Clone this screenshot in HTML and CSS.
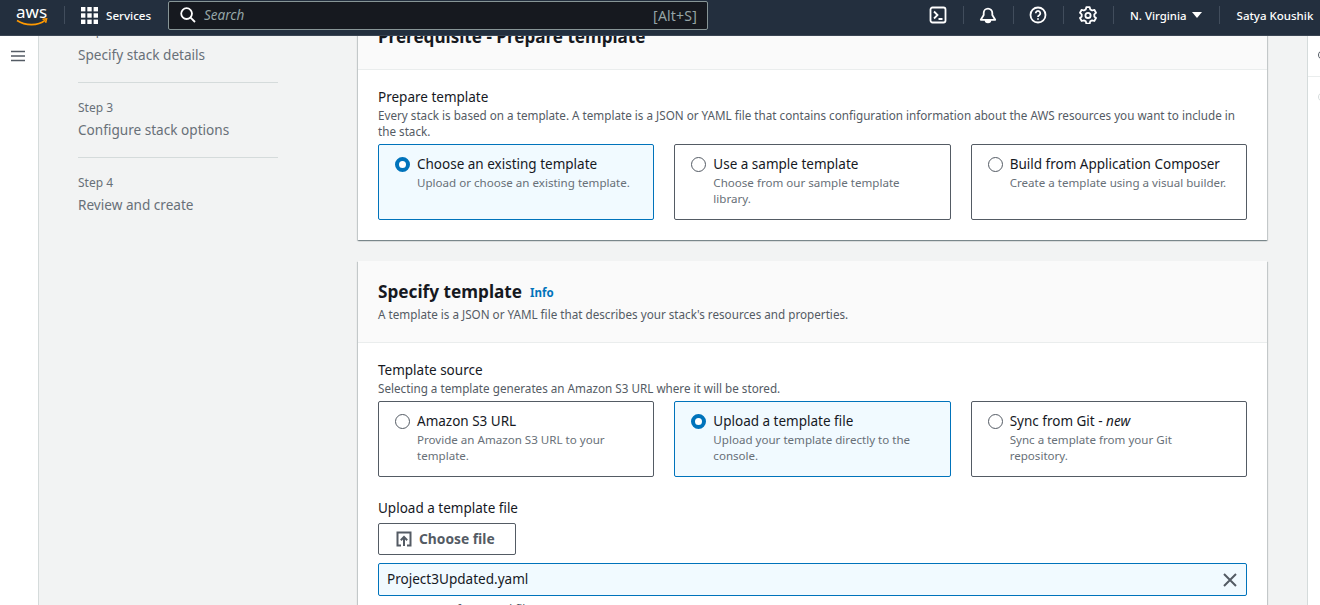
FILE: index.html
```html
<!DOCTYPE html>
<html lang="en">
<head>
<meta charset="utf-8">
<title>Create stack</title>
<link rel="stylesheet" href="styles.css">
</head>
<body>
<header class="topbar">
  <div class="logo">
    <svg width="32" height="25" viewBox="0 0 32 25"><path class="smile" d="M1 17.500c8.500 5.500 21 5.500 28-.2" /><path class="smile" d="M26.500 16.200l4-.4-.9 4" /></svg>
    <span class="logo-text">aws</span>
  </div>
  <div class="sep sep-logo"></div>
  <button class="services">
    <svg class="grid" width="17" height="17" viewBox="0 0 17 17"><g fill="#fff"><rect width="4.400" height="4.400"/><rect x="6.300" width="4.400" height="4.400"/><rect x="12.600" width="4.400" height="4.400"/><rect y="6.300" width="4.400" height="4.400"/><rect x="6.300" y="6.300" width="4.400" height="4.400"/><rect x="12.600" y="6.300" width="4.400" height="4.400"/><rect y="12.600" width="4.400" height="4.400"/><rect x="6.300" y="12.600" width="4.400" height="4.400"/><rect x="12.600" y="12.600" width="4.400" height="4.400"/></g></svg>
    <span>Services</span>
  </button>
  <div class="search">
    <svg width="16" height="16" viewBox="0 0 16 16" fill="none" stroke="#fff" stroke-width="1.800"><circle cx="6.600" cy="6.600" r="5.400"/><path d="M10.600 10.600L15 15"/></svg>
    <span class="search-ph">Search</span>
    <span class="search-key">[Alt+S]</span>
  </div>
  <div class="tools">
    <span class="tool"><svg width="18" height="18" viewBox="0 0 18 18" fill="none" stroke="#fff" stroke-width="1.800"><rect x="1.500" y="1.500" width="15" height="15" rx="2"/><path d="M5 5.500L8.500 9 5 12.500M9.500 13h4"/></svg></span>
    <span class="sep"></span>
    <span class="tool"><svg width="18" height="18" viewBox="0 0 18 18" fill="none" stroke="#fff" stroke-width="1.800"><path d="M1.800 13.800h14.400L13.300 9V7a4.300 4.300 0 0 0-8.600 0v2z" stroke-linejoin="round"/><path d="M6.600 14a2.400 2.400 0 0 0 4.800 0z" fill="#fff"/></svg></span>
    <span class="sep"></span>
    <span class="tool"><svg width="18" height="18" viewBox="0 0 18 18" fill="none" stroke="#fff" stroke-width="1.800"><circle cx="9" cy="9" r="7.500"/><path d="M6.700 7.200a2.300 2.300 0 1 1 3.500 2c-.9.500-1.200 1-1.200 1.800"/><path d="M9 12.300v1.500"/></svg></span>
    <span class="sep"></span>
    <span class="tool"><svg width="18" height="18" viewBox="0 0 18 18" fill="none" stroke="#fff" stroke-width="1.800"><path d="M7.300 1.200h3.400l.5 2.200 1.900 1.100 2.200-.7 1.700 3-1.700 1.500v2.200l1.700 1.500-1.700 3-2.200-.7-1.900 1.100-.5 2.200H7.300l-.5-2.200-1.900-1.100-2.200.7-1.700-3 1.700-1.500V8.300L1 6.800l1.700-3 2.200.7 1.900-1.100z" stroke-linejoin="round"/><circle cx="9" cy="9.400" r="2.600"/></svg></span>
    <span class="sep"></span>
    <span class="region">N. Virginia<i class="caret"></i></span>
    <span class="sep"></span>
    <span class="user">Satya Koushik</span>
  </div>
</header>
<div class="shell">
  <aside class="rail">
    <svg width="14" height="12" viewBox="0 0 14 12" fill="none" stroke="#545b64" stroke-width="1.600"><path d="M0 1.500h14M0 6h14M0 10.500h14"/></svg>
  </aside>
  <main class="page">
    <nav class="steps">
      <div class="step step-cut"><span class="step-num">Step 2</span><span class="step-name">Specify stack details</span></div>
      <div class="step"><span class="step-num">Step 3</span><span class="step-name">Configure stack options</span></div>
      <div class="step"><span class="step-num">Step 4</span><span class="step-name">Review and create</span></div>
    </nav>
    <div class="content">
      <section class="panel panel-first">
        <div class="panel-head panel-head-first"><h2>Prerequisite - Prepare template</h2></div>
        <div class="panel-body">
          <div class="label">Prepare template</div>
          <p class="hint hint-wrap">Every stack is based on a template. A template is a JSON or YAML file that contains configuration information about the AWS resources you want to include in the stack.</p>
          <div class="tiles">
            <div class="tile tile-on"><i class="radio radio-on"></i><div><div class="tile-title">Choose an existing template</div><div class="tile-desc">Upload or choose an existing template.</div></div></div>
            <div class="tile"><i class="radio"></i><div><div class="tile-title">Use a sample template</div><div class="tile-desc">Choose from our sample template library.</div></div></div>
            <div class="tile"><i class="radio"></i><div><div class="tile-title">Build from Application Composer</div><div class="tile-desc">Create a template using a visual builder.</div></div></div>
          </div>
        </div>
      </section>
      <section class="panel">
        <div class="panel-head">
          <h2 class="title">Specify template <a class="info">Info</a></h2>
          <p class="hint head-hint">A template is a JSON or YAML file that describes your stack's resources and properties.</p>
        </div>
        <div class="panel-body">
          <div class="label">Template source</div>
          <p class="hint">Selecting a template generates an Amazon S3 URL where it will be stored.</p>
          <div class="tiles">
            <div class="tile"><i class="radio"></i><div><div class="tile-title">Amazon S3 URL</div><div class="tile-desc">Provide an Amazon S3 URL to your template.</div></div></div>
            <div class="tile tile-on"><i class="radio radio-on"></i><div><div class="tile-title">Upload a template file</div><div class="tile-desc">Upload your template directly to the console.</div></div></div>
            <div class="tile"><i class="radio"></i><div><div class="tile-title">Sync from Git - <em>new</em></div><div class="tile-desc">Sync a template from your Git repository.</div></div></div>
          </div>
          <div class="label label-upload">Upload a template file</div>
          <button class="choose">
            <svg width="16" height="16" viewBox="0 0 16 16" fill="none" stroke="#545b64" stroke-width="2"><path d="M5 14.500H1.500v-13h13v13H11"/><path d="M8 15V6M4.800 9.200L8 6l3.200 3.200"/></svg>
            <span class="choose-text">Choose file</span>
          </button>
          <div class="file"><span>Project3Updated.yaml</span>
            <svg width="14" height="14" viewBox="0 0 14 14" fill="none" stroke="#545b64" stroke-width="2"><path d="M1 1l12 12M13 1L1 13"/></svg>
          </div>
          <p class="hint">JSON or YAML formatted file</p>
        </div>
      </section>
    </div>
    <aside class="side">
      <i class="side-icon"></i>
      <div class="side-box"></div>
      <i class="side-icon side-icon-faint"></i>
    </aside>
  </main>
</div>
</body>
</html>
```
FILE: styles.css
```css
* { box-sizing: border-box; }
html, body { margin: 0; height: 605px; overflow: hidden; }
body { font-family: "Noto Sans", sans-serif; color: #16191f; background: #f2f3f3; display: flex; flex-direction: column; }

.topbar { flex: none; height: 36px; background: #232f3e; border-bottom: 1px solid #3a4553; padding-bottom: 5px; display: flex; align-items: center; color: #fff; position: relative; z-index: 2; }
.logo { width: 32px; height: 25px; margin-left: 16px; position: relative; flex: none; }
.logo-text { position: absolute; left: 0; top: -2px; font-size: 17px; line-height: 22px; color: #fff; }
.logo svg { position: absolute; left: 0; top: 0; }
.smile { fill: none; stroke: #f90; stroke-width: 1.600; }
.sep { width: 1px; height: 18px; background: #414d5c; flex: none; }
.sep-logo { margin-left: 16px; }
.services { display: flex; align-items: center; gap: 8px; background: none; border: 0; padding: 0; margin-left: 16px; color: #fff; font: 500 11.600px "Noto Sans", sans-serif; width: 87px; flex: none; }
.search { width: 540px; height: 29px; flex: none; background: #16191f; border: 1px solid #879596; border-radius: 2px; display: flex; align-items: center; padding: 0 10px 0 11px; }
.search-ph { font-style: italic; font-size: 13.500px; color: #95a5a6; margin-left: 8px; flex: 1; }
.search-key { font-size: 14px; letter-spacing: .2px; color: #95a5a6; }
.tools { margin-left: 206px; display: flex; align-items: center; }
.tool { width: 18px; height: 18px; display: flex; margin: 0 16px 0 15px; }
.region { font-size: 11.400px; font-weight: 500; display: flex; align-items: center; gap: 5px; margin: 0 17px 0 16px; white-space: nowrap; }
.caret { width: 0; height: 0; border-left: 5px solid transparent; border-right: 5px solid transparent; border-top: 6px solid #fff; }
.user { font-size: 11.500px; font-weight: 500; margin-left: 17px; white-space: nowrap; }

.shell { flex: 1; display: flex; min-height: 0; overflow: hidden; }
.rail { flex: none; width: 39px; background: #fff; border-right: 1px solid #d5dbdb; padding: 14px 0 0 11px; }
.rail svg { display: block; }
.page { flex: 1; display: flex; align-items: flex-start; min-width: 0; }

.steps { flex: none; width: 240px; padding-left: 39px; margin-top: -28px; }
.step { width: 200px; height: 75px; padding-top: 16px; border-bottom: 1px solid #d5dbdb; display: flex; flex-direction: column; gap: 3px; }
.step-cut { padding-top: 14px; gap: 5px; }
.step:last-child { border-bottom: 0; }
.step-num { font-size: 12px; line-height: 18px; color: #687078; }
.step-name { font-size: 13.600px; line-height: 19px; color: #687078; }

.content { flex: none; width: 909px; margin-left: 79px; margin-top: -22px; }
.panel { background: #fff; border-radius: 0; box-shadow: 0 1px 1px 0 rgba(0,28,36,.3), 1px 1px 1px 0 rgba(0,28,36,.15), -1px 1px 1px 0 rgba(0,28,36,.15); margin-bottom: 21px; }
.panel-head { background: #fafafa; border-bottom: 1px solid #eaeded; padding: 20px 20px 0; height: 82px; }
.panel-head-first { height: 56px; padding-top: 12px; }
h2 { margin: 0; font-size: 17.100px; line-height: 22px; font-weight: 700; color: #16191f; }
.title { display: flex; align-items: baseline; gap: 8px; font-size: 17.200px; }
.info { font-size: 11.500px; font-weight: 700; color: #0073bb; position: relative; top: -1px; }
.hint.head-hint { margin-top: 2px; }
.panel-body { padding: 18px 20px 20px; }
.label { font-size: 13.500px; line-height: 18px; color: #16191f; }
.hint { margin: 2px 0 0; font-size: 11.680px; line-height: 16px; color: #545b64; }
.hint-wrap { max-width: 869px; }
.tiles { display: grid; grid-template-columns: repeat(3, 1fr); gap: 20px; margin-top: 4px; }
.tile { height: 76px; border: 1px solid #545b64; border-radius: 2px; padding: 10px 16px 0 16px; display: flex; gap: 7px; background: #fff; }
.tile-on { border-color: #0073bb; background: #f1faff; }
.radio { flex: none; width: 15px; height: 15px; margin-top: 2px; border: 1px solid #545b64; border-radius: 50%; background: #fff; }
.radio-on { border: 4px solid #0073bb; }
.tile-title { font-size: 13.500px; line-height: 18px; color: #16191f; }
.tile-desc { font-size: 11.580px; line-height: 16px; color: #687078; margin-top: 2px; }
em { font-style: italic; }
.label-upload { margin-top: 22px; }
.choose { margin-top: 6px; display: flex; align-items: center; gap: 7px; width: 138px; height: 32px; padding: 0 17px; background: #fff; border: 1px solid #545b64; border-radius: 2px; font: 700 13.800px "Noto Sans", sans-serif; color: #545b64; }
.choose-text { padding-bottom: 2px; }
.file { margin-top: 8px; height: 33px; border: 1px solid #0073bb; border-radius: 2px; background: #f1faff; display: flex; align-items: center; justify-content: space-between; padding: 0 9px 0 8px; font-size: 13.550px; color: #16191f; }
.file > span { padding-bottom: 2px; }
.file + .hint { margin-top: 6px; }

.side { flex: none; width: 13px; margin-left: 40px; height: 569px; background: #fff; border-left: 1px solid #d5dbdb; padding-top: 14px; overflow: hidden; }
.side-box { border-top: 1px solid #eaeded; margin-top: 16px; }
.side-icon { display: block; width: 10px; height: 10px; margin-left: 10px; border: 1.500px solid #545b64; border-radius: 50%; }
.side-icon-faint { margin-top: 15px; border-color: #d5dbdb; }
```
